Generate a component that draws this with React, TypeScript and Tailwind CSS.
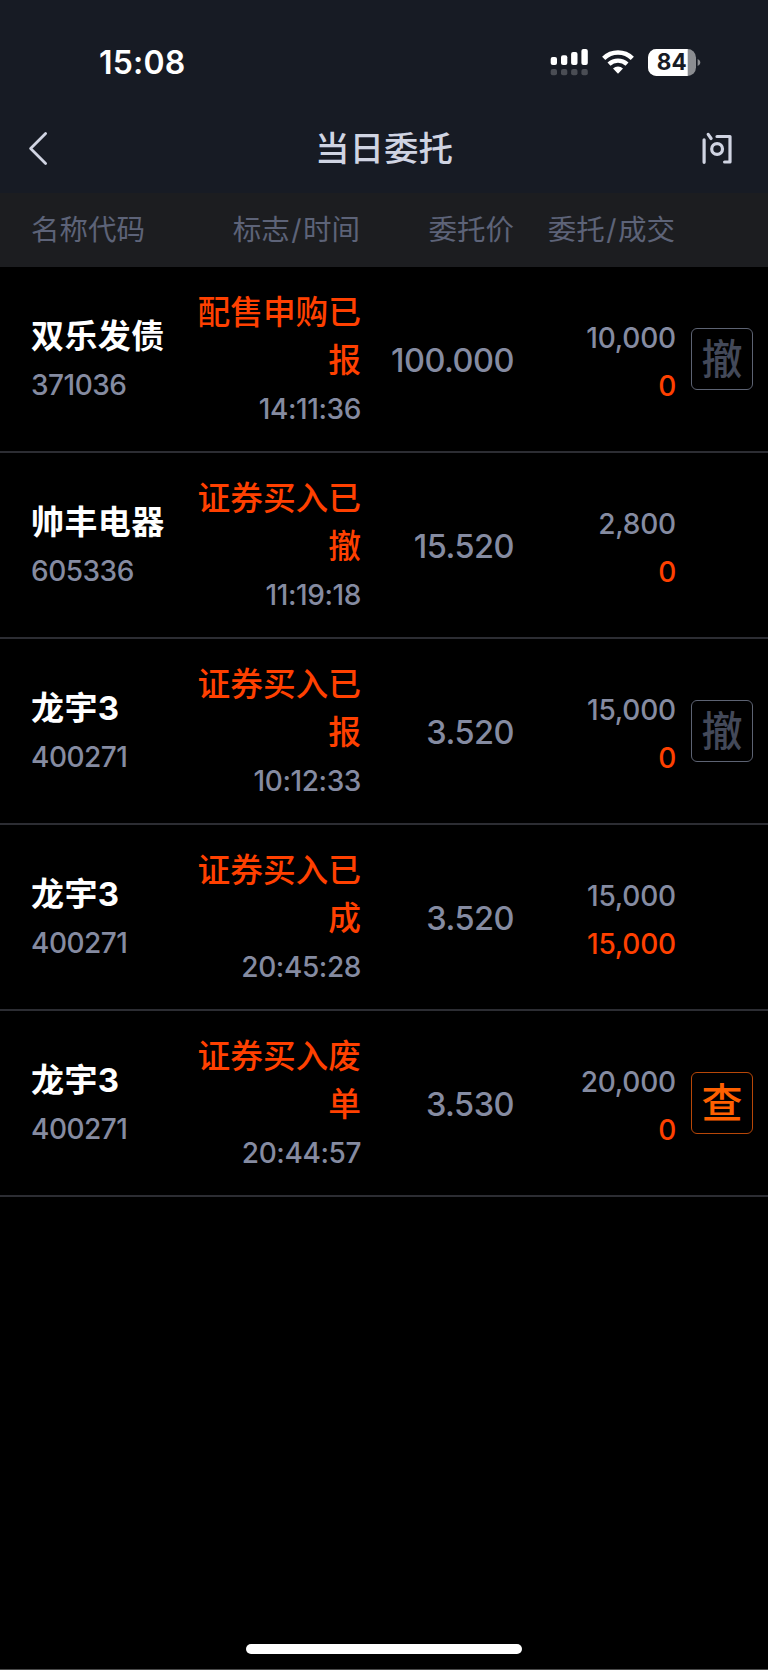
import clsx from "clsx";

type OrderAction = "cancel" | "query";

type Order = {
  id: string;
  name: string;
  code: string;
  status: string;
  time: string;
  price: string;
  quantity: string;
  filled: string;
  action?: OrderAction;
};

const ORDERS: Order[] = [
  {
    id: "1",
    name: "双乐发债",
    code: "371036",
    status: "配售申购已报",
    time: "14:11:36",
    price: "100.000",
    quantity: "10,000",
    filled: "0",
    action: "cancel"
  },
  {
    id: "2",
    name: "帅丰电器",
    code: "605336",
    status: "证券买入已撤",
    time: "11:19:18",
    price: "15.520",
    quantity: "2,800",
    filled: "0"
  },
  {
    id: "3",
    name: "龙宇3",
    code: "400271",
    status: "证券买入已报",
    time: "10:12:33",
    price: "3.520",
    quantity: "15,000",
    filled: "0",
    action: "cancel"
  },
  {
    id: "4",
    name: "龙宇3",
    code: "400271",
    status: "证券买入已成",
    time: "20:45:28",
    price: "3.520",
    quantity: "15,000",
    filled: "15,000"
  },
  {
    id: "5",
    name: "龙宇3",
    code: "400271",
    status: "证券买入废单",
    time: "20:44:57",
    price: "3.530",
    quantity: "20,000",
    filled: "0",
    action: "query"
  }
];

const TABLE_GRID = "grid grid-cols-[163px_166px_154px_161px_78px] pl-[31px]";

export default function App() {
  return (
    <div className="flex h-[1670px] w-[768px] flex-col overflow-hidden border-b border-[#4a4a4a] bg-black font-['Inter','Noto_Sans_CJK_SC',sans-serif]">
      <div className="h-[193px] shrink-0 bg-[#171b24]">
        <StatusBar />
        <NavBar />
      </div>
      <TableHeader />
      <main className="flex-1">
        {ORDERS.map((order) => (
          <OrderRow key={order.id} order={order} />
        ))}
      </main>
      <div className="mb-[15px] ml-[246px] h-[10px] w-[276px] rounded-full bg-white" />
    </div>
  );
}

function StatusBar() {
  return (
    <div className="flex h-[125px] items-center justify-between pl-[99px] pr-[67px]">
      <span className="pt-px text-[32px] font-semibold leading-none tracking-[0.2px] text-white">15:08</span>
      <div className="flex items-center">
        <SignalIcon />
        <WifiIcon />
        <BatteryIcon />
      </div>
    </div>
  );
}

function SignalIcon() {
  return (
    <svg className="mr-[14px]" width="38" height="27" viewBox="0 0 38 27">
      <g fill="#fff">
        <rect x="0.7" y="8" width="6.3" height="8" rx="2" />
        <rect x="11" y="6.3" width="6.3" height="9.7" rx="2" />
        <rect x="21.1" y="3" width="6.4" height="13" rx="2" />
        <rect x="31.4" y="0.1" width="6.4" height="15.9" rx="2" />
      </g>
      <g fill="#4a4d54">
        <rect x="0.7" y="20" width="6.3" height="6.2" rx="2" />
        <rect x="11" y="20" width="6.3" height="6.2" rx="2" />
        <rect x="21.1" y="20" width="6.4" height="6.2" rx="2" />
        <rect x="31.4" y="20" width="6.4" height="6.2" rx="2" />
      </g>
    </svg>
  );
}

function WifiIcon() {
  return (
    <svg className="mr-[14px]" width="32" height="27" viewBox="0 0 32 27" fill="none" stroke="#fff">
      <path d="M1.7 9.3a20.6 20.6 0 0 1 28.6 0" strokeWidth="4.6" />
      <path d="M7 15.2a13.2 13.2 0 0 1 18 0" strokeWidth="4.4" />
      <path d="M11 19.4a7.6 7.6 0 0 1 10 0L16 24.8z" fill="#fff" stroke="none" />
    </svg>
  );
}

function BatteryIcon() {
  return (
    <svg width="53" height="27" viewBox="0 0 53 27">
      <rect width="48" height="27" rx="8.5" fill="#8b8d91" />
      <path d="M8.5 0H39.7V27H8.5A8.5 8.5 0 0 1 0 18.5V8.5A8.5 8.5 0 0 1 8.5 0z" fill="#fff" />
      <path d="M49.6 10c3.6 1.4 3.6 5.6 0 7z" fill="#8b8d91" />
      <text
        x="23.7"
        y="21.2"
        textAnchor="middle"
        fill="#171b24"
        className="font-['Inter',sans-serif] text-[22.5px] font-bold"
      >
        84
      </text>
    </svg>
  );
}

function NavBar() {
  return (
    <div className="flex h-[46px] items-center justify-between pl-[28px] pr-[34px]">
      <svg width="34" height="36" viewBox="0 0 34 36" fill="none" stroke="#d0d4e2" strokeWidth="2.8">
        <path d="M17.6 3.6 2.6 18.6 17.6 33.6" strokeLinecap="round" strokeLinejoin="round" />
      </svg>
      <h1 className="pl-[6px] pt-[2px] text-[34.5px] font-medium leading-none text-[#d0d4e2]">当日委托</h1>
      <svg width="34" height="36" viewBox="0 0 34 36" fill="none" stroke="#d0d4e2" strokeWidth="3.2">
        <path d="M4.1 9.8V32.3M8.2 4.4l2.9 4.1M17 6.5H30V32H24.6" strokeLinecap="round" strokeLinejoin="round" />
        <circle cx="17.1" cy="19" r="5.4" />
      </svg>
    </div>
  );
}

function TableHeader() {
  return (
    <div
      className={clsx(
        TABLE_GRID,
        "h-[74px] shrink-0 items-center bg-[#1c1d20] text-right text-[28.5px] leading-none text-[#5d6378]"
      )}
    >
      <span className="text-left">名称代码</span>
      <span>
        标志<Slash />时间
      </span>
      <span>委托价</span>
      <span>
        委托<Slash />成交
      </span>
    </div>
  );
}

function Slash() {
  return <span className="mx-[1.5px]">/</span>;
}

function OrderRow({ order }: { order: Order }) {
  return (
    <div
      className={clsx(
        TABLE_GRID,
        "h-[186.1px] items-center border-b-2 border-[#2c2d33] text-right text-[28px] leading-[48px] text-[#858ba1]"
      )}
    >
      <div className="pt-[4px] text-left">
        <div className="-mt-px mb-px text-[33px] font-bold tracking-[0.4px] text-white">{order.name}</div>
        <div className="font-[450] tracking-[-0.5px]">{order.code}</div>
      </div>
      <div className="-mr-px pt-[4px]">
        <div className="-mt-px mb-px text-[32.7px] font-medium text-[#ff4000]">{order.status}</div>
        <div className="font-[450] tracking-[-0.4px]">{order.time}</div>
      </div>
      <div className="pt-[3px] text-[32.5px] font-[450] tracking-[-0.5px]">{order.price}</div>
      <div className="-mr-px pt-[5px] font-[450] tracking-[-0.2px]">
        <div>{order.quantity}</div>
        <div className="text-[#ff4000]">{order.filled}</div>
      </div>
      <div className="pl-4">{order.action && <ActionButton action={order.action} />}</div>
    </div>
  );
}

function ActionButton({ action }: { action: OrderAction }) {
  const isQuery = action === "query";
  return (
    <button
      type="button"
      className={clsx(
        "flex size-[62px] items-center justify-center rounded-md border text-[41px] font-medium leading-none",
        isQuery ? "border-[#b84708] text-[#ff6000]" : "border-[#5d6373] text-[#434959]"
      )}
    >
      {isQuery ? "查" : "撤"}
    </button>
  );
}
